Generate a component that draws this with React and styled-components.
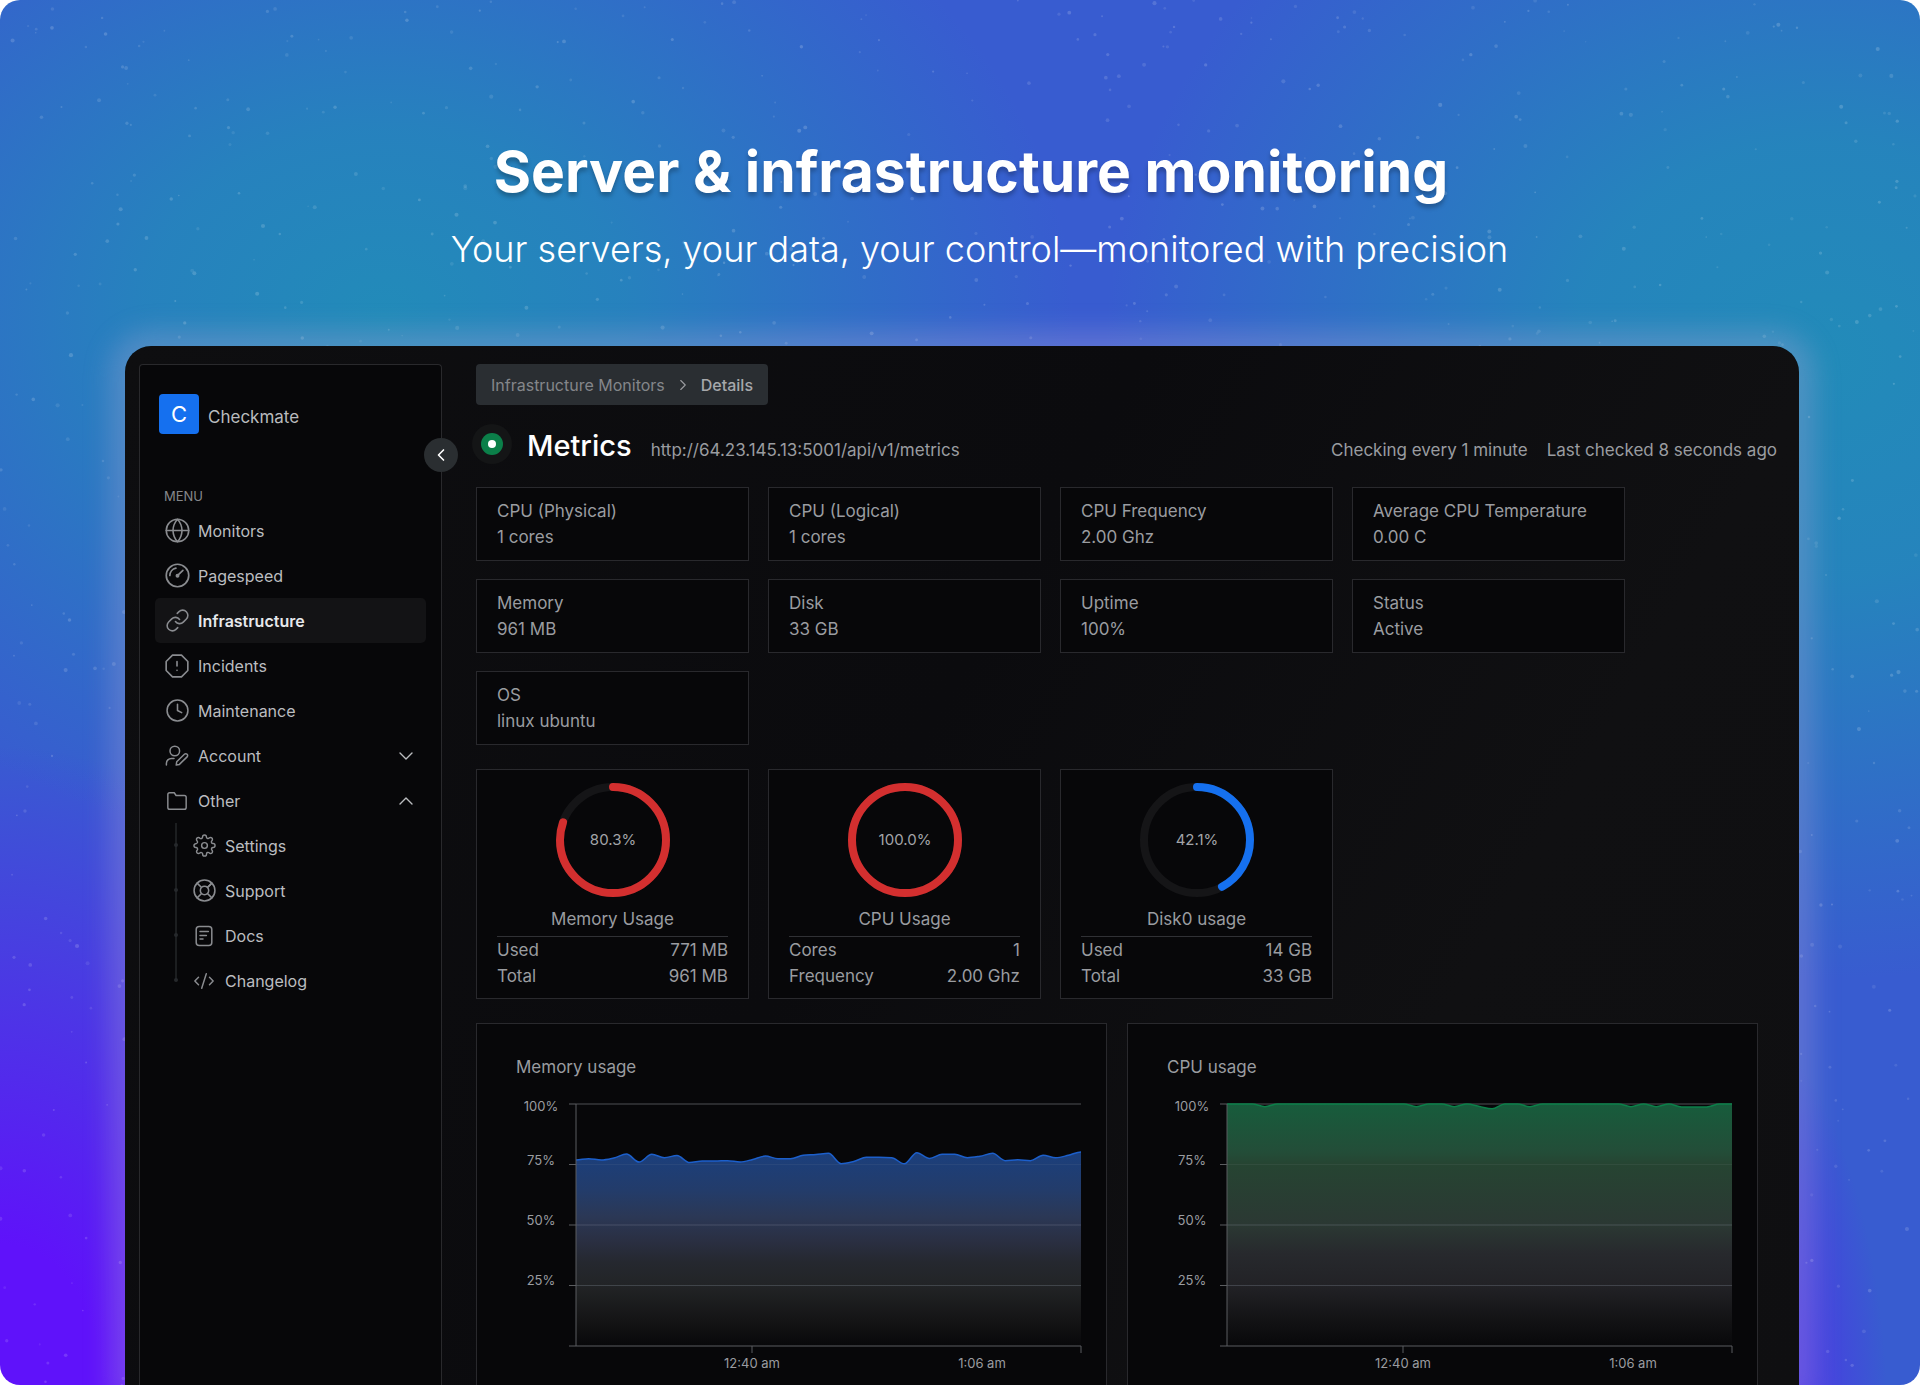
import React from 'react';
import styled, { createGlobalStyle } from 'styled-components';
import {
    FiGlobe,
    FiLink,
    FiAlertOctagon,
    FiClock,
    FiFolder,
    FiSettings,
    FiLifeBuoy,
} from 'react-icons/fi';
import { ChevronDown, ChevronLeft, ChevronRight, ChevronUp, CodeXml } from 'lucide-react';

const GlobalStyle = createGlobalStyle`
    * {
        box-sizing: border-box;
    }
    body {
        margin: 0;
        background: #ffffff;
        font-family: Inter, sans-serif;
    }
    h1, h2, h3, p, ul, dl, dd {
        margin: 0;
        padding: 0;
        font-weight: 400;
    }
    `;

const Page = styled.div`
    position: relative;
    display: flex;
    flex-direction: column;
    min-height: 100vh;
    padding: 0 121px 0 125px;
    overflow: hidden;
    border-radius: 20px;
    background:
        radial-gradient(ellipse 460px 640px at 0% 100%, #5f12fa 0%, #5f12fa 22%, rgba(95, 18, 250, 0) 100%),
        radial-gradient(ellipse 180px 440px at 89% 104%, #5f12fa 0%, rgba(95, 18, 250, 0) 100%),
        radial-gradient(ellipse 690px 540px at 20% 23%, #228bb9 0%, rgba(34, 139, 185, 0.8) 35%, rgba(34, 139, 185, 0) 100%),
        radial-gradient(ellipse 720px 620px at 95% 26%, #228bb9 0%, rgba(34, 139, 185, 0.85) 35%, rgba(34, 139, 185, 0) 100%),
        #385cd0;
    `;

const Specks = styled.svg`
    position: absolute;
    inset: 0;
    width: 100%;
    height: 100%;
    `;

const Hero = styled.header`
    position: relative;
    padding: 132px 0 70px 18px;
    text-align: center;
    color: #ffffff;
    `;

const HeroTitle = styled.h1`
    font-size: 57px;
    line-height: 80px;
    font-weight: 700;
    text-shadow: 0 4px 4px rgba(0, 0, 0, 0.25);
    `;

const HeroText = styled.p`
    padding: 10px 0 0 17px;
    font-size: 36px;
    line-height: 54px;
    font-weight: 300;
    `;

const Panel = styled.div`
    position: relative;
    flex: 1;
    display: flex;
    padding: 18px 22px 0 14px;
    border-radius: 26px 26px 0 0;
    background: linear-gradient(120deg, #0e0e10 0%, #0b0b0e 45%, #101012 75%, #0f0f11 100%);
    box-shadow: 0 0 26px 16px rgba(185, 170, 220, 0.28);
    color: #9a9ca0;
    font-size: 17px;
    `;

const Sidebar = styled.aside`
    position: relative;
    flex: none;
    width: 303px;
    margin-right: 34px;
    padding: 29px 15px 0;
    border: 1px solid #29292c;
    border-bottom: 0;
    border-radius: 4px 4px 0 0;
    background: #070709;
    `;

const Brand = styled.div`
    display: flex;
    align-items: flex-end;
    gap: 9px;
    margin: 0 0 52px 4px;
    line-height: 34px;
    color: #b9bbbe;
    `;

const Logo = styled.span`
    display: grid;
    place-items: center;
    width: 40px;
    height: 40px;
    border-radius: 4px;
    background: #1570ef;
    color: #ffffff;
    font-size: 22px;
    `;

const CollapseBtn = styled.button`
    position: absolute;
    top: 73px;
    right: -17px;
    display: grid;
    place-items: center;
    width: 34px;
    height: 34px;
    padding: 0;
    border: 0;
    border-radius: 50%;
    background: #2a2e31;
    color: #ffffff;
    `;

const MenuLabel = styled.h2`
    margin: 0 0 2px 9px;
    font-size: 13px;
    line-height: 20px;
    color: #85878b;
    `;

const MenuList = styled.ul`
    list-style: none;
    `;

const SubList = styled.ul`
    position: relative;
    list-style: none;
    padding-left: 27px;

    &::before {
        content: '';
        position: absolute;
        left: 20px;
        top: 0;
        bottom: 22px;
        width: 2px;
        background: #1c1e20;
    }
    `;

const SubItem = styled.li`
    position: relative;

    &::before {
        content: '';
        position: absolute;
        left: -8px;
        top: 20px;
        width: 4px;
        height: 4px;
        border-radius: 50%;
        background: #26292c;
    }
    `;

const MenuItem = styled.a`
    display: flex;
    align-items: center;
    gap: 9px;
    width: 100%;
    height: 45px;
    padding: 0 8px 0 10px;
    border: 0;
    border-radius: 5px;
    background: ${props => props.$active ? '#131315' : 'transparent'};
    color: ${props => props.$active ? '#e6e8ec' : '#bbbdc0'};
    font-family: inherit;
    font-size: 16px;
    font-weight: ${props => props.$active ? 600 : 400};
    text-align: left;
    text-decoration: none;
    `;

const IconSlot = styled.span`
    display: flex;
    flex: none;
    justify-content: center;
    align-items: center;
    width: 24px;
    color: #8a8c90;

    svg {
        flex: none;
    }
    `;

const ItemText = styled.span`
    flex: 1;
    `;

const Main = styled.main`
    flex: 1;
    display: flex;
    flex-direction: column;
    min-width: 0;
    `;

const Breadcrumb = styled.nav`
    display: flex;
    align-self: flex-start;
    align-items: center;
    gap: 9px;
    height: 41px;
    padding: 0 15px;
    border-radius: 4px;
    background: #2a2e32;
    font-size: 16px;
    `;

const Crumb = styled.a`
    color: ${props => props.$current ? '#a6a8ab' : '#84868a'};
    font-weight: ${props => props.$current ? 500 : 400};
    text-decoration: none;
    `;

const TitleRow = styled.div`
    display: flex;
    align-items: center;
    margin: 21px 0;
    `;

const StatusDot = styled.span`
    display: grid;
    place-items: center;
    width: 22px;
    height: 22px;
    margin: 0 24px 4px 5px;
    border-radius: 50%;
    background: #0b7f49;
    box-shadow: 0 0 0 9px #141516;

    &::after {
        content: '';
        width: 8px;
        height: 8px;
        border-radius: 50%;
        background: #ffffff;
    }
    `;

const TitleText = styled.div`
    flex: 1;
    display: flex;
    align-items: baseline;
    gap: 19px;
    line-height: 24px;
    `;

const Title = styled.h2`
    font-size: 29px;
    line-height: 40px;
    font-weight: 500;
    color: #ffffff;
    `;

const CheckInfo = styled.span`
    &:first-of-type {
        margin-left: auto;
    }
    `;

const CardRow = styled.section`
    display: flex;
    flex-wrap: wrap;
    gap: 18px 19px;
    margin-bottom: 24px;
    line-height: 26px;
    `;

const Card = styled.div`
    border: 1px solid #29292d;
    background: #070709;
    `;

const StatCard = styled(Card)`
    width: 273px;
    padding: 10px 20px;
    `;

const GaugeCard = styled(Card)`
    display: flex;
    flex-direction: column;
    align-items: center;
    width: 273px;
    padding: 13px 20px 9px;
    `;

const GaugeTitle = styled.h3`
    margin: 9px 0 4px;
    font-size: 17px;
    `;

const GaugeRows = styled.dl`
    width: 100%;
    border-top: 1px solid #303135;
    `;

const GaugeRow = styled.div`
    display: flex;
    justify-content: space-between;
    `;

const ChartRow = styled.section`
    flex: 1;
    display: grid;
    grid-template-columns: 1fr 1fr;
    gap: 20px;
    margin-right: 19px;
    `;

const ChartCard = styled(Card)`
    padding: 30px 16px 0 39px;
    border-bottom: 0;
    `;

const ChartTitle = styled.h3`
    font-size: 17px;
    line-height: 26px;
    `;

const ChartSvg = styled.svg`
    display: block;
    width: 100%;
    height: auto;
    overflow: visible;
    font-size: 13px;
    fill: #9a9ca0;
    `;

const GaugeIcon = () => (
    <svg width="27" height="27" viewBox="0 0 24 24" fill="none" stroke="currentColor" strokeWidth="1.5" strokeLinecap="round">
        <circle cx="12" cy="12" r="10" />
        <path d="M5.2 12A6.8 6.8 0 0 1 10.6 5.4" />
        <path d="M12.4 11.6L16.8 7.4" />
        <circle cx="12" cy="12.2" r="1" fill="currentColor" />
    </svg>
);

const UserEditIcon = () => (
    <svg width="24" height="24" viewBox="0 0 24 24" fill="none" stroke="currentColor" strokeWidth="1.5" strokeLinecap="round" strokeLinejoin="round">
        <circle cx="9.8" cy="7" r="4.8" />
        <path d="M1.4 21v-1.6a5 5 0 0 1 5-5H9" />
        <path d="M11.2 21l.5-3.2 7.7-7.6a1.9 1.9 0 0 1 2.7 2.7l-7.7 7.5z" />
    </svg>
);

const DocsIcon = () => (
    <svg width="24" height="24" viewBox="0 0 24 24" fill="none" stroke="currentColor" strokeWidth="1.5" strokeLinecap="round">
        <rect x="4.2" y="2.5" width="15.6" height="19" rx="3" />
        <path d="M8 7.6h8.4M8 11.4h6.4M8 15h3" />
    </svg>
);

const menuItems = [
    { label: 'Monitors', icon: <FiGlobe size={27} strokeWidth={1.4} /> },
    { label: 'Pagespeed', icon: <GaugeIcon /> },
    { label: 'Infrastructure', icon: <FiLink size={25} strokeWidth={1.5} />, active: true },
    { label: 'Incidents', icon: <FiAlertOctagon size={26} strokeWidth={1.5} /> },
    { label: 'Maintenance', icon: <FiClock size={25} strokeWidth={1.5} /> },
];

const otherItems = [
    { label: 'Settings', icon: <FiSettings size={23} strokeWidth={1.5} /> },
    { label: 'Support', icon: <FiLifeBuoy size={25} strokeWidth={1.5} /> },
    { label: 'Docs', icon: <DocsIcon /> },
    { label: 'Changelog', icon: <CodeXml size={22} strokeWidth={1.6} /> },
];

const stats = [
    ['CPU (Physical)', '1 cores'],
    ['CPU (Logical)', '1 cores'],
    ['CPU Frequency', '2.00 Ghz'],
    ['Average CPU Temperature', '0.00 C'],
    ['Memory', '961 MB'],
    ['Disk', '33 GB'],
    ['Uptime', '100%'],
    ['Status', 'Active'],
    ['OS', 'linux ubuntu'],
];

const gauges = [
    { title: 'Memory Usage', value: 80.3, color: '#d32f2f', rows: [['Used', '771 MB'], ['Total', '961 MB']] },
    { title: 'CPU Usage', value: 100, color: '#d32f2f', rows: [['Cores', '1'], ['Frequency', '2.00 Ghz']] },
    { title: 'Disk0 usage', value: 42.1, color: '#1570ef', rows: [['Used', '14 GB'], ['Total', '33 GB']] },
];

const memoryData = [
    76.9, 77.4, 76.9, 77.7, 79.3, 76, 79.2, 77.8, 78.7, 75.8, 76.4, 76.4, 76.6, 76,
    77.1, 78.5, 77.4, 77.4, 78.8, 79.1, 79.6, 75.3, 76.2, 78, 78, 77.8, 75.3, 79.9,
    77.5, 79.2, 79.2, 77.8, 78.4, 79.6, 76.6, 77, 76.6, 78.8, 77.8, 78.8, 80.2,
];

const cpuData = [
    100, 100, 100, 98.9, 100, 100, 100, 100, 100, 100, 100, 100, 100, 100,
    100, 98.9, 100, 100, 98.9, 100, 99, 98, 100, 100, 98.9, 100, 100, 100,
    100, 100, 100, 100, 98.9, 100, 98.9, 100, 98.8, 98.8, 98.8, 100, 100,
];

const memoryStops = [
    [0, '#1b3f7d'], [20, '#233c6a'], [33, '#2b3856'], [46, '#2a2f42'],
    [57, '#25282f'], [69, '#222426'], [86, '#151516'], [100, '#08080a'],
];

const cpuStops = [
    [0, '#175c3c'], [20, '#234d38'], [25, '#264432'], [50, '#2b3833'],
    [62, '#27292d'], [75, '#222226'], [88, '#141416'], [100, '#08080a'],
];

const PLOT = { left: 60, right: 565, top: 24, bottom: 266 };

const toPoints = (data) => data.map((v, i) => [
    PLOT.left + (PLOT.right - PLOT.left) * i / (data.length - 1),
    PLOT.bottom - (PLOT.bottom - PLOT.top) * v / 100,
]);

// horizontal tangents at every peak, so the curve never overshoots the data
const toCurve = (points) => {
    const slopes = points.map((p, i) => {
        if (i === 0 || i === points.length - 1) return 0;
        const before = (p[1] - points[i - 1][1]) / (p[0] - points[i - 1][0]);
        const after = (points[i + 1][1] - p[1]) / (points[i + 1][0] - p[0]);
        if (before * after <= 0) return 0;
        return 2 * before * after / (before + after);
    });
    let d = `M${points[0][0]} ${points[0][1]}`;
    for (let i = 1; i < points.length; i++) {
        const [x0, y0] = points[i - 1];
        const [x1, y1] = points[i];
        const dx = (x1 - x0) / 3;
        d += `C${x0 + dx} ${y0 + dx * slopes[i - 1]} ${x1 - dx} ${y1 - dx * slopes[i]} ${x1} ${y1}`;
    }
    return d;
};

const makeSpecks = (count) => {
    let seed = 71;
    const next = () => {
        seed = (seed * 16807) % 2147483647;
        return seed / 2147483647;
    };
    return Array.from({ length: count }, () => ({
        x: next() * 100,
        y: next() * 100,
        r: 0.8 + next() * 1.3,
        opacity: 0.08 + next() * 0.1,
    }));
};

const specks = makeSpecks(1500);

const Gauge = ({ title, value, color, rows }) => {
    const length = 2 * Math.PI * 53;
    return (
        <GaugeCard>
            <svg width="114" height="114" viewBox="0 0 114 114" role="img" aria-label={title}>
                <circle cx="57" cy="57" r="53" fill="none" stroke="#151517" strokeWidth="8" />
                <circle
                    cx="57"
                    cy="57"
                    r="53"
                    fill="none"
                    stroke={color}
                    strokeWidth="8"
                    strokeLinecap="round"
                    strokeDasharray={`${length * value / 100} ${length}`}
                    transform="rotate(-90 57 57)"
                />
                <text x="57" y="62" textAnchor="middle" fontSize="15" fill="#a2a4a8">{value.toFixed(1)}%</text>
            </svg>
            <GaugeTitle>{title}</GaugeTitle>
            <GaugeRows>
                {rows.map(([name, amount]) => (
                    <GaugeRow key={name}>
                        <dt>{name}</dt>
                        <dd>{amount}</dd>
                    </GaugeRow>
                ))}
            </GaugeRows>
        </GaugeCard>
    );
};

const Chart = ({ id, title, data, stops, color }) => {
    const { left, right, top, bottom } = PLOT;
    const line = toCurve(toPoints(data));
    const step = (bottom - top) / 4;
    return (
        <ChartCard>
            <ChartTitle>{title}</ChartTitle>
            <ChartSvg viewBox="0 0 574 304">
                <defs>
                    <linearGradient id={id} x1="0" y1="0" x2="0" y2="1">
                        {stops.map(([offset, stop]) => (
                            <stop key={offset} offset={`${offset}%`} stopColor={stop} />
                        ))}
                    </linearGradient>
                </defs>
                <path d={`M${left} ${top}H${right}`} stroke="#2a2b2e" strokeWidth="2" />
                <path d={`${line}L${right} ${bottom}L${left} ${bottom}Z`} fill={`url(#${id})`} />
                {[1, 2, 3].map(i => (
                    <path key={i} d={`M${left} ${top + step * i}H${right}`} stroke="#8f99a8" strokeOpacity={i === 1 ? 0.1 : 0.28} />
                ))}
                <path d={line} fill="none" stroke={color} strokeWidth="1.5" />
                <path
                    d={`M${left} ${top}V${bottom}H${right}v7M236 ${bottom}v7${[0, 1, 2, 3, 4].map(i => `M${left - 7} ${top + step * i}h7`).join('')}`}
                    fill="none"
                    stroke="#5b5d60"
                />
                <text x="25" y="31" textAnchor="middle">100%</text>
                <text x="25" y="85" textAnchor="middle">75%</text>
                <text x="25" y="145" textAnchor="middle">50%</text>
                <text x="25" y="205" textAnchor="middle">25%</text>
                <text x="236" y="288" textAnchor="middle">12:40 am</text>
                <text x="466" y="288" textAnchor="middle">1:06 am</text>
            </ChartSvg>
        </ChartCard>
    );
};

class App extends React.Component {
    render() {
        return (
            <Page>
                <GlobalStyle />
                <Specks aria-hidden="true">
                    {specks.map((s, i) => (
                        <circle key={i} cx={`${s.x}%`} cy={`${s.y}%`} r={s.r} fill="#ffffff" opacity={s.opacity} />
                    ))}
                </Specks>
                <Hero>
                    <HeroTitle>Server &amp; infrastructure monitoring</HeroTitle>
                    <HeroText>Your servers, your data, your control—monitored with precision</HeroText>
                </Hero>
                <Panel>
                    <Sidebar>
                        <Brand>
                            <Logo>C</Logo>
                            Checkmate
                        </Brand>
                        <CollapseBtn aria-label="Collapse sidebar">
                            <ChevronLeft size={20} strokeWidth={2} />
                        </CollapseBtn>
                        <MenuLabel>MENU</MenuLabel>
                        <MenuList>
                            {menuItems.map(item => (
                                <li key={item.label}>
                                    <MenuItem href="#" $active={item.active}>
                                        <IconSlot>{item.icon}</IconSlot>
                                        <ItemText>{item.label}</ItemText>
                                    </MenuItem>
                                </li>
                            ))}
                            <li>
                                <MenuItem as="button">
                                    <IconSlot><UserEditIcon /></IconSlot>
                                    <ItemText>Account</ItemText>
                                    <ChevronDown size={24} strokeWidth={1.4} />
                                </MenuItem>
                            </li>
                            <li>
                                <MenuItem as="button">
                                    <IconSlot><FiFolder size={22} strokeWidth={1.6} /></IconSlot>
                                    <ItemText>Other</ItemText>
                                    <ChevronUp size={24} strokeWidth={1.4} />
                                </MenuItem>
                                <SubList>
                                    {otherItems.map(item => (
                                        <SubItem key={item.label}>
                                            <MenuItem href="#">
                                                <IconSlot>{item.icon}</IconSlot>
                                                <ItemText>{item.label}</ItemText>
                                            </MenuItem>
                                        </SubItem>
                                    ))}
                                </SubList>
                            </li>
                        </MenuList>
                    </Sidebar>
                    <Main>
                        <Breadcrumb aria-label="Breadcrumb">
                            <Crumb href="#">Infrastructure Monitors</Crumb>
                            <ChevronRight size={18} strokeWidth={1.5} />
                            <Crumb href="#" $current>Details</Crumb>
                        </Breadcrumb>
                        <TitleRow>
                            <StatusDot />
                            <TitleText>
                                <Title>Metrics</Title>
                                <div>http://64.23.145.13:5001/api/v1/metrics</div>
                                <CheckInfo>Checking every 1 minute</CheckInfo>
                                <CheckInfo>Last checked 8 seconds ago</CheckInfo>
                            </TitleText>
                        </TitleRow>
                        <CardRow>
                            {stats.map(([name, value]) => (
                                <StatCard key={name}>
                                    <div>{name}</div>
                                    <div>{value}</div>
                                </StatCard>
                            ))}
                        </CardRow>
                        <CardRow>
                            {gauges.map(gauge => <Gauge key={gauge.title} {...gauge} />)}
                        </CardRow>
                        <ChartRow>
                            <Chart id="memory-fill" title="Memory usage" data={memoryData} stops={memoryStops} color="#1c5fcb" />
                            <Chart id="cpu-fill" title="CPU usage" data={cpuData} stops={cpuStops} color="#0b8049" />
                        </ChartRow>
                    </Main>
                </Panel>
            </Page>
        );
    }
}

export default App;
